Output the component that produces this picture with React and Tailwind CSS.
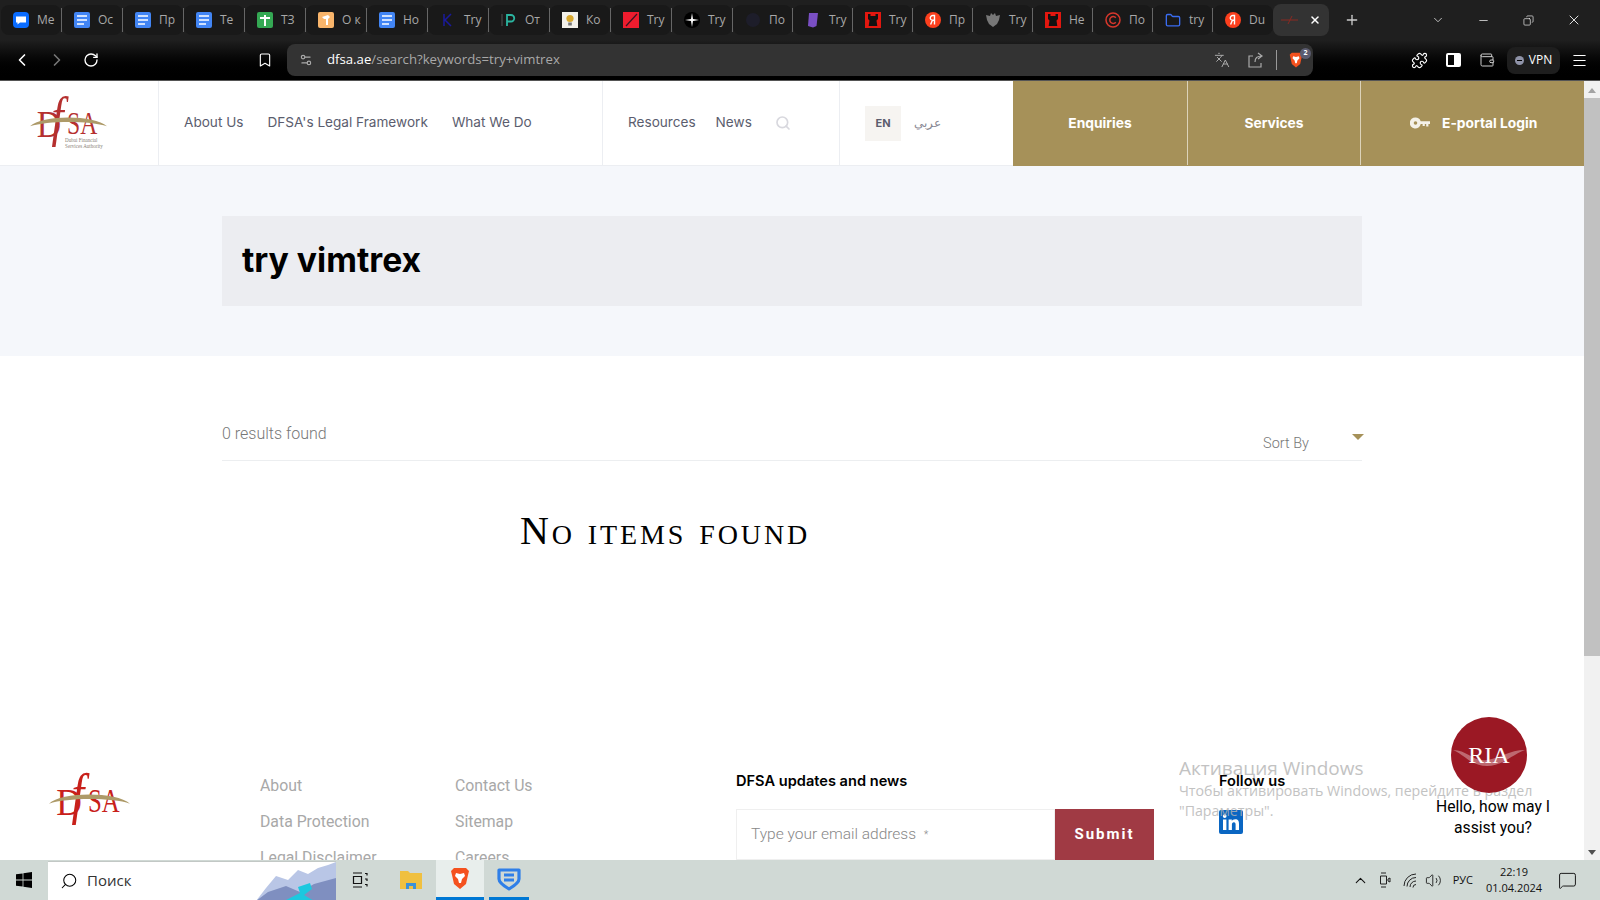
import React from "react";
import {
  ChevronLeft,
  ChevronRight,
  ChevronDown,
  ChevronUp,
  RotateCw,
  Bookmark,
  Settings2,
  Languages,
  Puzzle,
  Wallet,
  Menu,
  Minus,
  X,
  Plus,
  Search,
  Volume2,
  MessageSquare,
  Folder,
  Copy,
} from "lucide-react";

const DocIcon = () => (
  <svg width="16" height="16" viewBox="0 0 16 16">
    <rect width="16" height="16" rx="2" fill="#4285f4" />
    <path d="M3 4h10M3 8h10M3 12h7" stroke="#fff" strokeWidth="1.6" />
  </svg>
);

const SheetIcon = () => (
  <svg width="16" height="16" viewBox="0 0 16 16">
    <rect width="16" height="16" rx="2" fill="#34a853" />
    <path d="M3 6h10M8 3v11" stroke="#fff" strokeWidth="2" />
  </svg>
);

const ChatIcon = () => (
  <svg width="16" height="16" viewBox="0 0 16 16">
    <rect width="16" height="16" rx="4" fill="#0a6cff" />
    <path d="M3 4.5h10v6H7l-2.5 2v-2H3z" fill="#fff" />
  </svg>
);

const YandexIcon = () => (
  <svg width="16" height="16" viewBox="0 0 16 16">
    <circle cx="8" cy="8" r="8" fill="#fc3f1d" />
    <path d="M9.5 12.5v-9H8a2.4 2.4 0 0 0-.6 4.8L5.6 12.5M9.5 8.3H8" stroke="#fff" strokeWidth="1.4" fill="none" />
  </svg>
);

const FortIcon = () => (
  <svg width="16" height="16" viewBox="0 0 16 16">
    <rect width="16" height="16" fill="#e2170f" />
    <path d="M3 2h2.5v2h5V2H13v5l-1.5 1.5.8 5.5H3.7l.8-5.5L3 7z" fill="#111" />
  </svg>
);

const PlainIcon = ({ children }) => (
  <svg width="16" height="16" viewBox="0 0 16 16">
    {children}
  </svg>
);

const tabs = [
  { icon: <ChatIcon />, title: "Ме" },
  { icon: <DocIcon />, title: "Ос" },
  { icon: <DocIcon />, title: "Пр" },
  { icon: <DocIcon />, title: "Те" },
  { icon: <SheetIcon />, title: "ТЗ" },
  {
    icon: (
      <PlainIcon>
        <rect width="16" height="16" rx="2" fill="#f9b56b" />
        <path d="M4 5l6-2 2 2-2 2v6H8V7H6z" fill="#fff" />
      </PlainIcon>
    ),
    title: "О к",
  },
  { icon: <DocIcon />, title: "Но" },
  {
    icon: (
      <PlainIcon>
        <path d="M4 2v12M11 2L5 8l6 6" stroke="#1a1a9c" strokeWidth="1.5" fill="none" />
      </PlainIcon>
    ),
    title: "Try",
  },
  {
    icon: (
      <PlainIcon>
        <path d="M1 2v12" stroke="#555" strokeWidth="1" />
        <path d="M6 14V3h4a3 3 0 0 1 0 6.5H6" stroke="#2bb5a0" strokeWidth="1.8" fill="none" />
      </PlainIcon>
    ),
    title: "От",
  },
  {
    icon: (
      <PlainIcon>
        <rect width="16" height="16" fill="#f3f1ea" />
        <circle cx="8" cy="6.5" r="3.6" fill="#d9a92e" />
        <rect x="6.2" y="10.5" width="3.6" height="3" fill="#777" />
      </PlainIcon>
    ),
    title: "Ко",
  },
  {
    icon: (
      <PlainIcon>
        <rect width="16" height="16" fill="#ee1c2e" />
        <path d="M3 14L14 2" stroke="#3a1420" strokeWidth="1.2" />
      </PlainIcon>
    ),
    title: "Try",
  },
  {
    icon: (
      <PlainIcon>
        <circle cx="8" cy="8" r="8" fill="#000" />
        <path d="M8 1l1 6 6 1-6 1-1 6-1-6-6-1 6-1z" fill="#fff" />
      </PlainIcon>
    ),
    title: "Try",
  },
  {
    icon: (
      <PlainIcon>
        <circle cx="8" cy="8" r="7" fill="#1d1d2a" />
      </PlainIcon>
    ),
    title: "По",
  },
  {
    icon: (
      <PlainIcon>
        <path d="M4 1h9l-1.5 13L8 15.5 3 14z" fill="#7a4fc4" />
      </PlainIcon>
    ),
    title: "Try",
  },
  { icon: <FortIcon />, title: "Try" },
  { icon: <YandexIcon />, title: "Пр" },
  {
    icon: (
      <PlainIcon>
        <path d="M8 3l2-2 1 3 4-1-1 5-2 4-4 3-4-3-2-4-1-5 4 1 1-3z" fill="#777" />
      </PlainIcon>
    ),
    title: "Try",
  },
  { icon: <FortIcon />, title: "Не" },
  {
    icon: (
      <PlainIcon>
        <circle cx="8" cy="8" r="7" fill="none" stroke="#d6372c" strokeWidth="1.5" />
        <path d="M10.8 5.8a3.4 3.4 0 1 0 0 4.4" fill="none" stroke="#d6372c" strokeWidth="1.5" />
      </PlainIcon>
    ),
    title: "По",
  },
  { icon: <Folder size={17} color="#3a6cf0" strokeWidth={2} />, title: "try" },
  { icon: <YandexIcon />, title: "Du", last: true },
];

const BraveLion = ({ size = 18 }) => (
  <svg width={size} height={size * 1.15} viewBox="0 0 20 23">
    <path d="M4 1h12l3 3-1 4-2 9-6 5-6-5-2-9-1-4z" fill="#f4511e" />
    <path d="M6 6l4 1 4-1 1 3-3 3-1 4h-2l-1-4-3-3z" fill="#fff" />
  </svg>
);

// small logo: real letters with a gold arc running through them
const DfsaLogo = ({ width, tagline, color }) => (
  <svg width={width} viewBox="0 0 80 52" className="overflow-visible">
    <g fontFamily="'Liberation Serif', serif" fill={color}>
      <text x="7" y="40" fontSize="38" textLength="25" lengthAdjust="spacingAndGlyphs">
        D
      </text>
      <text transform="translate(22 38) scale(0.8 1)" fontStyle="italic" fontSize="56">
        f
      </text>
      <text x="38" y="37" fontSize="32" textLength="31" lengthAdjust="spacingAndGlyphs">
        SA
      </text>
    </g>
    <path d="M0 29C12 17 66 17 79 29C62 23 18 23 0 29Z" fill="#ad9a68" />
    {tagline && (
      <g fontFamily="'Liberation Serif', serif" fontSize="5.2" fill="#8a7f78">
        <text x="36" y="45">Dubai Financial</text>
        <text x="36" y="51">Services Authority</text>
      </g>
    )}
  </svg>
);

const TabStrip = () => (
  <div className="flex h-10 items-center bg-[#1f1f1f] pl-px font-['Open_Sans',sans-serif] text-[12px] text-[#a8a8a8]">
    {tabs.map((tab, i) => (
      <div key={i} className={i < 12 ? "flex h-[30px] w-[61px] shrink-0 items-center" : "flex h-[30px] w-[60px] shrink-0 items-center"}>
        <div className="flex h-full flex-1 items-center gap-2 rounded-lg bg-[#191919] pl-3">
          <span className="flex w-4 shrink-0 justify-center">{tab.icon}</span>
          <span>{tab.title}</span>
        </div>
        {!tab.last && <div className="h-6 w-px shrink-0 bg-[#666]" />}
      </div>
    ))}
    <div className="flex h-[32px] w-[56px] shrink-0 items-center justify-between rounded-lg bg-[#333] px-2">
      <svg width="18" height="8" viewBox="0 0 18 8">
        <path d="M0 4h17M7 8l4-8" stroke="#8b2a22" strokeWidth="1" />
      </svg>
      <X size={12} color="#fff" strokeWidth={3} />
    </div>
    <Plus size={16} color="#ccc" strokeWidth={2} className="ml-[15px] shrink-0" />
    <div className="flex items-center text-[#eee]">
      <ChevronDown size={14} strokeWidth={1.3} className="ml-[71px] shrink-0" />
      <Minus size={13} strokeWidth={1.4} className="ml-[32px] shrink-0" />
      <Copy size={11} strokeWidth={1.5} className="ml-[33px] shrink-0 scale-x-[-1]" />
      <X size={16} strokeWidth={1.4} className="ml-[32px] shrink-0" />
    </div>
  </div>
);

const Toolbar = () => (
  <div className="flex h-[41px] items-center border-b border-[#555] bg-gradient-to-b from-[#1f1f1f] to-black pl-3 pr-3 text-white">
    <ChevronLeft size={20} strokeWidth={2} />
    <ChevronRight size={20} strokeWidth={2} color="#777" className="ml-[15px]" />
    <RotateCw size={16} strokeWidth={2} className="ml-[16px]" />
    <Bookmark size={16} strokeWidth={1.7} className="ml-[158px]" />
    <div className="ml-[14px] flex h-8 w-[1026px] items-center rounded-lg bg-[#333] pl-3 pr-[10px] font-['Open_Sans',sans-serif] text-[13.2px]">
      <Settings2 size={14} color="#aaa" />
      <span className="ml-[14px] text-white">dfsa.ae</span>
      <span className="text-[#a8a8a8]">/search?keywords=try+vimtrex</span>
      <div className="ml-auto flex items-center text-[#aaa]">
        <Languages size={16} strokeWidth={1.5} />
        <svg width="17" height="16" viewBox="0 0 17 16" fill="none" stroke="#aaa" strokeWidth="1.2" className="ml-[17px]">
          <path d="M6 4H2v11h12v-4M8 10c0-4 2-6 7-6M11 1l4 3-4 3" />
        </svg>
        <div className="ml-3 h-5 w-px bg-[#999]" />
        <div className="relative ml-3">
          <BraveLion size={14} />
          <span className="absolute -right-2 -top-1 flex h-[11px] w-[11px] items-center justify-center rounded-full bg-[#5b5c70] text-[7px] font-bold text-white">
            2
          </span>
        </div>
      </div>
    </div>
    <Puzzle size={17} strokeWidth={1.6} className="ml-[98px]" />
    <div className="ml-[18px] flex h-[14px] w-[15px] rounded-[2px] border-2 border-white">
      <div className="ml-auto h-full w-[5px] bg-white" />
    </div>
    <Wallet size={16} strokeWidth={1.5} color="#ccc" className="ml-[18px]" />
    <div className="ml-[12px] flex h-[27px] w-[53px] items-center justify-center gap-[5px] rounded-lg bg-[#1e1e1e] font-['Open_Sans',sans-serif] text-[12px]">
      <span className="flex h-[9px] w-[9px] items-center justify-center rounded-full bg-[#8f93a8]">
        <span className="h-px w-[5px] bg-black" />
      </span>
      VPN
    </div>
    <Menu size={17} strokeWidth={1.5} className="ml-[11px]" />
  </div>
);

const SiteHeader = () => (
  <header className="flex h-[85px] shrink-0 border-b border-[#eceef2] bg-white font-['Inter',sans-serif] text-[13.6px] text-[#5b5d6e]">
    <div className="flex w-[159px] items-center border-r border-[#eceef2] pl-[30px]">
      <DfsaLogo width={78} tagline color="#b5302f" />
    </div>
    <nav className="flex w-[444px] items-center gap-6 border-r border-[#eceef2] pb-[1px] pl-[25px]">
      <a>About Us</a>
      <a>DFSA's Legal Framework</a>
      <a>What We Do</a>
    </nav>
    <div className="flex w-[237px] items-center gap-5 border-r border-[#eceef2] pb-[1px] pl-[25px]">
      <a>Resources</a>
      <a>News</a>
      <Search size={16} color="#d8d8de" strokeWidth={2.5} className="ml-[3px]" />
    </div>
    <div className="flex w-[173px] items-center gap-[13px] pl-[25px]">
      <span className="flex h-[35px] w-[36px] items-center justify-center bg-[#f6f4f1] text-[11px] font-bold">EN</span>
      <span className="text-[12px] text-[#8a8a94]">عربي</span>
    </div>
    <div className="-mb-px flex flex-1 bg-[#a69159] pb-[1px] text-[13.8px] font-bold text-white">
      <a className="flex w-[174px] items-center justify-center">Enquiries</a>
      <a className="flex w-[173px] items-center justify-center border-l border-[#dcd3ba]">Services</a>
      <a className="flex flex-1 items-center gap-[12px] border-l border-[#dcd3ba] pl-[49px]">
        <svg width="20" height="12" viewBox="0 0 20 12" fill="#f4f1e8">
          <path fillRule="evenodd" d="M5.5 0.5a5.5 5.5 0 0 1 5.2 3.7H20v2.8h-1.6v2.6h-2.2V7h-1.4v2h-2.2V7h-1.9A5.5 5.5 0 1 1 5.5.5zm0 3.7a1.7 1.7 0 1 0 0 3.6 1.7 1.7 0 0 0 0-3.6z" />
        </svg>
        E-portal Login
      </a>
    </div>
  </header>
);

const ResultsBlock = () => (
  <>
    <section className="flex h-[190px] shrink-0 bg-[#f5f7fb] px-[222px] pt-[50px]">
      <div className="flex h-[90px] w-full items-center bg-[#ecedf1] pb-[2px] pl-[20px]">
        <h1 className="font-['Inter',sans-serif] text-[33.7px] font-bold text-black">try vimtrex</h1>
      </div>
    </section>
    <section className="mx-[222px] shrink-0 pt-[66px]">
      <div className="flex h-[39px] items-start justify-between border-b border-[#eceef0] font-['Roboto',sans-serif] text-[16px] font-light text-[#777]">
        <span>0 results found</span>
        <div className="-mr-[2px] flex items-start">
          <span className="mt-[11px] text-[14.5px]">Sort By</span>
          <span className="ml-[43px] mt-[12px] h-0 w-0 border-x-[6px] border-t-[6px] border-x-transparent border-t-[#a69159]" />
        </div>
      </div>
      <h2 className="mt-[47px] pl-[298px] font-['Liberation_Serif',serif] text-[40px] leading-[46px] tracking-[2.9px] text-black [font-variant:small-caps]">
        No items found
      </h2>
    </section>
  </>
);

const SiteFooter = () => (
  <footer className="mt-[210px] flex shrink-0 pl-[49px] font-['Roboto',sans-serif]">
    <div className="w-[211px] pt-[10px]">
      <DfsaLogo width={82} color="#c8201a" />
    </div>
    <ul className="w-[195px] space-y-[15px] pt-[11px] text-[15.8px] leading-[21px] text-[#a8a8a8]">
      <li>About</li>
      <li>Data Protection</li>
      <li>Legal Disclaimer</li>
    </ul>
    <ul className="w-[281px] space-y-[15px] pt-[11px] text-[15.8px] leading-[21px] text-[#a8a8a8]">
      <li>Contact Us</li>
      <li>Sitemap</li>
      <li>Careers</li>
    </ul>
    <div className="w-[483px] pt-[7px]">
      <h3 className="font-['Inter',sans-serif] text-[14.6px] font-semibold leading-[20px] text-black">DFSA updates and news</h3>
      <div className="mt-[18px] flex h-[51px] w-[418px]">
        <div className="flex flex-1 items-center border border-[#efefef] pl-[14px] text-[15.5px] font-light text-[#888]">
          Type your email address
          <span className="ml-2 text-[10px]">*</span>
        </div>
        <button className="w-[99px] bg-[#a03a44] text-[15px] font-bold tracking-[2px] text-white">Submit</button>
      </div>
    </div>
    <div className="pt-[7px]">
      <h3 className="font-['Inter',sans-serif] text-[14.6px] font-semibold leading-[20px] text-black">Follow us</h3>
      <svg width="24" height="24" viewBox="0 0 24 24" className="mt-[19px]">
        <rect width="24" height="24" rx="2" fill="#0a66c2" />
        <path d="M4 9.5h3.4V20H4zM5.7 4.2a1.9 1.9 0 1 1 0 3.8 1.9 1.9 0 0 1 0-3.8zM9.6 9.5h3.2V11c.6-1 1.8-1.8 3.4-1.8 3 0 3.8 2 3.8 4.7V20h-3.4v-5.4c0-1.3-.3-2.4-1.7-2.4s-2 1-2 2.4V20H9.6z" fill="#fff" />
      </svg>
    </div>
  </footer>
);

const ChatWidget = () => (
  <div className="absolute left-[1426px] top-[636px] flex w-[134px] flex-col items-center">
    <div className="relative mr-[8px] flex h-[76px] w-[76px] items-center justify-center rounded-full bg-[#9b1824]">
      <svg width="76" height="30" viewBox="0 0 76 30" className="absolute">
        <path d="M2 10c14 0 20 12 34 10s22-10 38-10c-14 5-22 16-38 16S14 15 2 10z" fill="#fff" opacity="0.35" />
      </svg>
      <span className="relative font-['Liberation_Serif',serif] text-[24px] text-white">RIA</span>
    </div>
    <p className="mt-[3px] text-center font-['Roboto',sans-serif] text-[15.7px] leading-[21px] text-black">
      Hello, how may I assist you?
    </p>
  </div>
);

const ActivationNote = () => (
  <div className="pointer-events-none absolute left-[1179px] top-[674px] font-['Open_Sans',sans-serif] text-[#b4b4b4] opacity-80">
    <div className="text-[19px] leading-[26px]">Активация Windows</div>
    <div className="w-[370px] text-[14.2px] leading-[19.5px]">
      Чтобы активировать Windows, перейдите в раздел "Параметры".
    </div>
  </div>
);

const Scrollbar = () => (
  <div className="flex w-4 shrink-0 flex-col items-center bg-[#f1f1f1]">
    <span className="mt-[7px] h-0 w-0 border-x-[4px] border-b-[5px] border-x-transparent border-b-[#a3a3a3]" />
    <div className="mt-[5px] h-[558px] w-full bg-[#c1c1c1]" />
    <span className="mb-[5px] mt-auto h-0 w-0 border-x-[4px] border-t-[5px] border-x-transparent border-t-[#505050]" />
  </div>
);

const Taskbar = () => (
  <div className="flex h-10 shrink-0 items-center bg-[#d0d9d5] font-['Open_Sans',sans-serif] text-black">
    <svg width="16" height="16" viewBox="0 0 16 16" className="ml-4" fill="#000">
      <path d="M0 2.3l6.6-.9v6.2H0zM7.4 1.3L16 0v7.6H7.4zM0 8.4h6.6v6.2L0 13.7zM7.4 8.4H16V16l-8.6-1.3z" />
    </svg>
    <div className="relative ml-4 flex h-[39px] w-[288px] items-center overflow-hidden border-t border-[#c2c8c5] bg-white pl-3">
      <Search size={18} strokeWidth={1.4} className="scale-x-[-1]" />
      <span className="ml-[9px] text-[15px] text-[#333]">Поиск</span>
      <svg width="80" height="39" viewBox="0 0 80 39" className="absolute right-0 top-0">
        <path d="M0 39L10 26 20 14 32 18 42 8 52 12 62 6 72 3 80 0v39z" fill="#b9c6e6" />
        <path d="M0 39l12-9 18-6 14 6 14-8 22-6v24z" fill="#7f8fc0" />
        <path d="M28 39l16-8-2-6 12-4 2 6-8 6 10 6z" fill="#1cc8df" />
      </svg>
    </div>
    <svg width="16" height="16" viewBox="0 0 16 16" className="ml-4" fill="none" stroke="#111" strokeWidth="1.2">
      <path d="M1 1h9M1 15h9M1.5 4.5h8v7h-8zM13 1.5h2v2M13 7h2v2M13 12.5h2v2" />
    </svg>
    <svg width="22" height="20" viewBox="0 0 22 20" className="ml-[32px]">
      <path d="M0 1h8l2 2h12v16H0z" fill="#f0c040" />
      <path d="M6 19v-6h10v6h-3v-3h-4v3z" fill="#3c91d8" />
    </svg>
    <div className="ml-[14px] flex h-10 w-[48px] items-center justify-center border-b-[3px] border-[#0078d4] bg-[#e8eeec]">
      <BraveLion size={20} />
    </div>
    <div className="ml-[5px] flex h-10 w-[40px] items-center justify-center border-b-[3px] border-[#0078d4]">
      <svg width="24" height="24" viewBox="0 0 24 24" fill="none" stroke="#2f7fe8" strokeWidth="3.2" strokeLinejoin="round">
        <path d="M2 3h20v9c0 3-5 7-10 10C7 19 2 15 2 12zM7 8h10M7 13h10" />
      </svg>
    </div>
    <div className="ml-auto flex items-center pr-[23px] text-[#111]">
      <ChevronUp size={17} strokeWidth={1.5} />
      <svg width="12" height="16" viewBox="0 0 12 16" className="ml-[10px]" fill="none" stroke="#222" strokeWidth="1">
        <path d="M2 1h5M2 15h5M1.5 4h6v8h-6zM9 7l2-1v4l-2-1z" />
      </svg>
      <svg width="16" height="15" viewBox="0 0 16 15" className="ml-[12px]" fill="none" stroke="#222" strokeWidth="1">
        <path d="M1 13a12 12 0 0 1 12-12M4 13.5a9 9 0 0 1 9-9M7 14a6 6 0 0 1 6-6M10 14.5a3 3 0 0 1 3-3" />
      </svg>
      <Volume2 size={17} strokeWidth={1.2} className="ml-[6px]" />
      <span className="ml-[11px] text-[11px]">РУС</span>
      <div className="ml-[11px] w-[60px] text-center text-[11px] leading-[16px]">
        <div>22:19</div>
        <div>01.04.2024</div>
      </div>
      <MessageSquare size={19} strokeWidth={1.2} className="ml-[14px]" />
    </div>
  </div>
);

const App = () => {
  return (
    <div className="flex h-screen w-full flex-col overflow-hidden bg-black">
      <TabStrip />
      <Toolbar />
      <div className="flex min-h-0 flex-1 bg-white">
        <main className="relative flex min-w-0 flex-1 flex-col overflow-hidden">
          <SiteHeader />
          <ResultsBlock />
          <SiteFooter />
          <ActivationNote />
          <ChatWidget />
        </main>
        <Scrollbar />
      </div>
      <Taskbar />
    </div>
  );
};

export default App;
